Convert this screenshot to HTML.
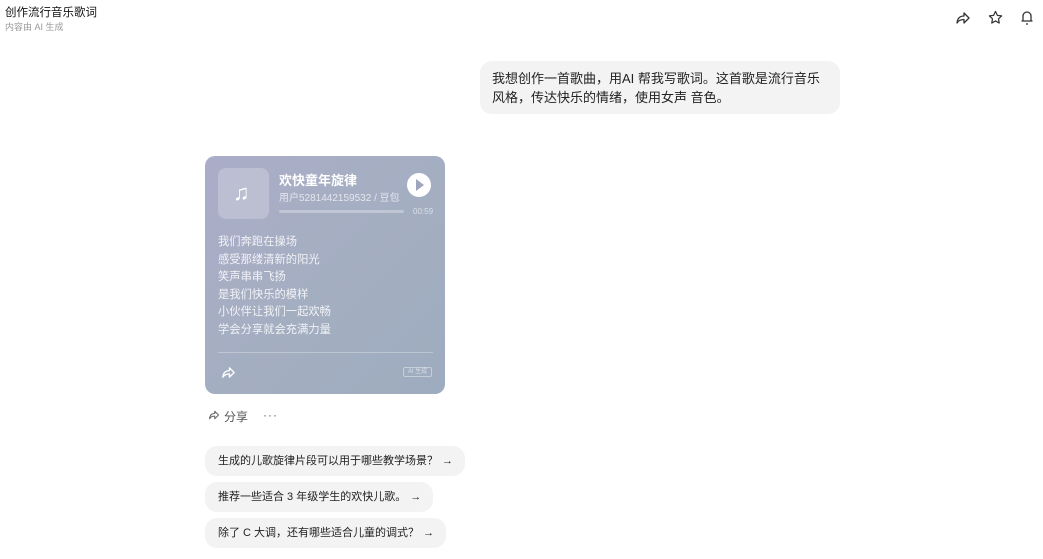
<!DOCTYPE html>
<html><head><meta charset="utf-8"><style>
*{margin:0;padding:0;box-sizing:border-box}
body{width:1043px;height:559px;background:#fff;font-family:"Liberation Sans","Noto Sans CJK SC",sans-serif;position:relative;overflow:hidden;color:#222}
.abs{position:absolute}
.chip{position:absolute;left:205px;height:30px;background:#f3f3f3;border-radius:12px;font-size:11px;line-height:30px;padding:0 12px 0 13px;color:#222;white-space:nowrap}
.chip span{font-size:11px;margin-left:4px}
</style></head><body>
<div class="abs" style="left:5px;top:4px;font-size:11.5px;color:#111">创作流行音乐歌词</div>
<div class="abs" style="left:5px;top:20px;font-size:9px;color:#999">内容由 AI 生成</div>
<svg class="abs" style="left:955px;top:10px" width="16" height="16" viewBox="0 0 16 16" fill="none" stroke="#333" stroke-width="1.3" stroke-linejoin="round"><path d="M9 3v3C5 6 2.5 8 2 13c1.5-2.5 3.5-3.5 7-3.5V13l5-5z"/></svg>
<svg class="abs" style="left:988px;top:10px" width="15" height="15" viewBox="0 0 16 16" fill="none" stroke="#333" stroke-width="1.3" stroke-linejoin="round"><path d="M8 1.5l2 4.2 4.5.6-3.3 3.1.8 4.5L8 11.7l-4 2.2.8-4.5L1.5 6.3 6 5.7z"/></svg>
<svg class="abs" style="left:1019px;top:9px" width="16" height="17" viewBox="0 0 16 17" fill="none" stroke="#333" stroke-width="1.3"><path d="M4 12V7a4 4 0 018 0v5M2.5 12h11M7 15h2"/></svg>
<div class="abs" style="left:480px;top:61px;width:360px;height:53px;background:#f3f3f3;border-radius:12px;padding:8px 12px;font-size:13px;line-height:19px;color:#222">我想创作一首歌曲，用AI 帮我写歌词。这首歌是流行音乐风格，传达快乐的情绪，使用女声 音色。</div>
<div class="abs" style="left:205px;top:156px;width:240px;height:238px;border-radius:10px;background:linear-gradient(135deg,#abadc8,#a3aec0 60%,#9eacbf)">
 <div class="abs" style="left:13px;top:12px;width:51px;height:51px;border-radius:8px;background:rgba(255,255,255,0.22)"></div>
 <div class="abs" style="left:28px;top:24px;font-size:22px;color:#fff;font-weight:bold">♫</div>
 <div class="abs" style="left:74px;top:14px;font-size:13px;color:#fff;font-weight:bold">欢快童年旋律</div>
 <div class="abs" style="left:74px;top:33px;font-size:10px;color:rgba(255,255,255,0.7)">用户5281442159532 / 豆包</div>
 <div class="abs" style="left:74px;top:54px;width:125px;height:3px;border-radius:2px;background:rgba(255,255,255,0.3)"></div>
 <div class="abs" style="left:208px;top:51px;font-size:8px;color:rgba(255,255,255,0.6)">00:59</div>
 <div class="abs" style="left:202px;top:17px;width:24px;height:24px;border-radius:50%;background:#fff"></div>
 <div class="abs" style="left:211px;top:23px;width:0;height:0;border-left:8px solid #9ea6bc;border-top:6px solid transparent;border-bottom:6px solid transparent"></div>
 <div class="abs" style="left:13px;top:78px;font-size:11.3px;line-height:17.5px;color:rgba(255,255,255,0.85)">我们奔跑在操场<br>感受那缕清新的阳光<br>笑声串串飞扬<br>是我们快乐的模样<br>小伙伴让我们一起欢畅<br>学会分享就会充满力量</div>
 <div class="abs" style="left:13px;top:196px;width:215px;height:1px;background:rgba(255,255,255,0.3)"></div>
 <svg class="abs" style="left:16px;top:209px" width="15" height="15" viewBox="0 0 16 16" fill="none" stroke="#fff" stroke-width="1.4" stroke-linejoin="round"><path d="M9 3v3C5 6 2.5 8 2 13c1.5-2.5 3.5-3.5 7-3.5V13l5-5z"/></svg>
 <div class="abs" style="left:198px;top:211px;width:29px;height:10px;border:1px solid rgba(255,255,255,0.4);border-radius:2px;font-size:6px;line-height:8px;text-align:center;color:rgba(255,255,255,0.6)">AI 生成</div>
</div>
<svg class="abs" style="left:208px;top:409px" width="12" height="12" viewBox="0 0 16 16" fill="none" stroke="#666" stroke-width="1.4" stroke-linejoin="round"><path d="M9 3v3C5 6 2.5 8 2 13c1.5-2.5 3.5-3.5 7-3.5V13l5-5z"/></svg>
<div class="abs" style="left:224px;top:408px;font-size:12px;color:#555">分享</div>
<div class="abs" style="left:263px;top:409px;font-size:12px;line-height:12px;color:#666;letter-spacing:1px">···</div>
<div class="chip" style="top:446px">生成的儿歌旋律片段可以用于哪些教学场景？<span>→</span></div>
<div class="chip" style="top:482px">推荐一些适合 3 年级学生的欢快儿歌。<span>→</span></div>
<div class="chip" style="top:518px">除了 C 大调，还有哪些适合儿童的调式？<span>→</span></div>
</body></html>
